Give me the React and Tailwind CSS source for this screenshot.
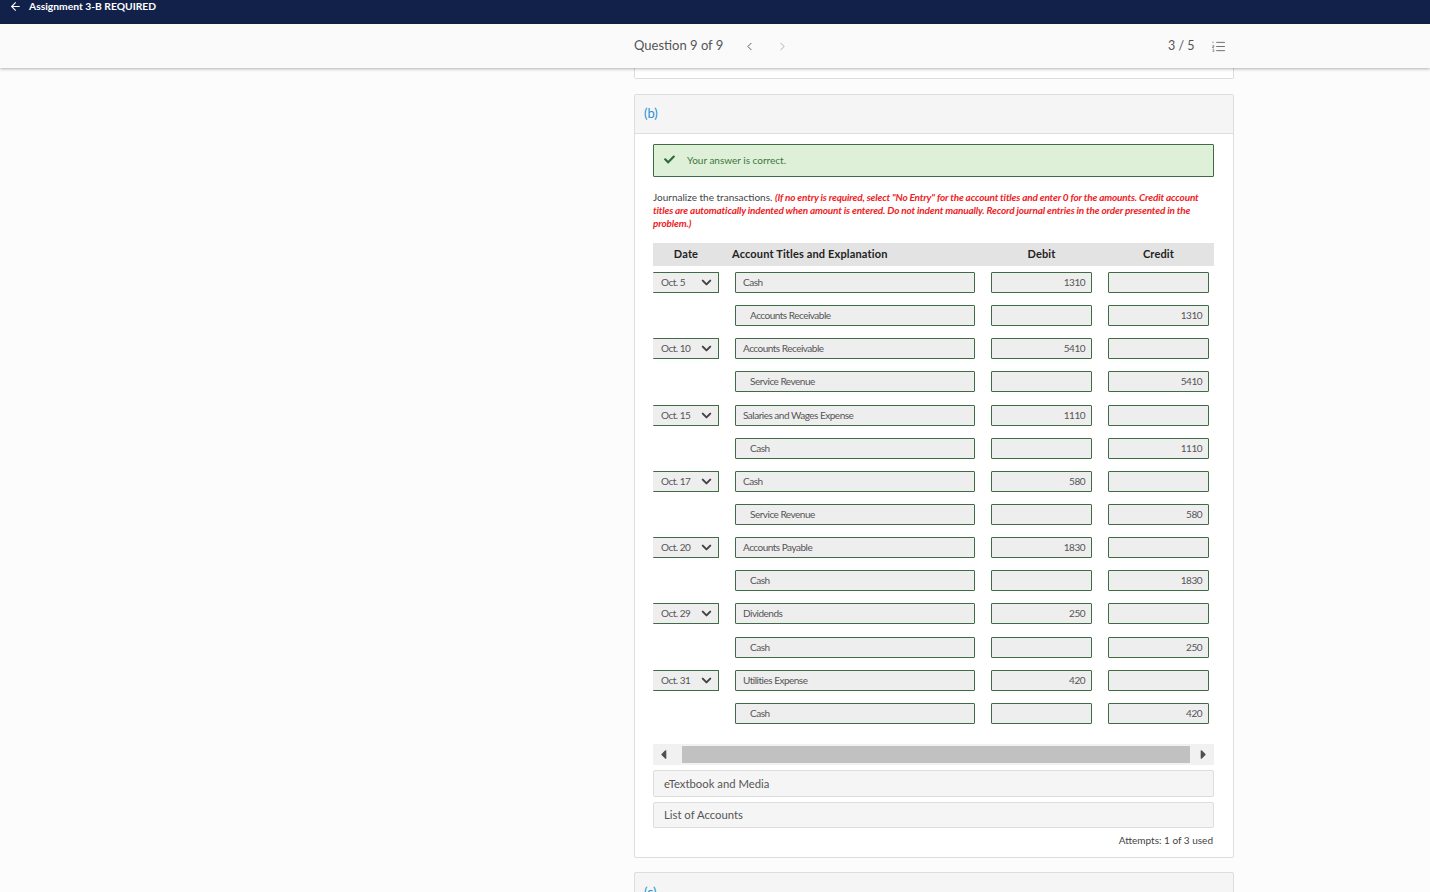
import { ArrowLeft, ChevronLeft, ChevronRight, ChevronDown } from "lucide-react";
import { FaCheck, FaCaretLeft, FaCaretRight } from "react-icons/fa";

const rows = [
  { date: "Oct. 5", account: "Cash", debit: "1310" },
  { account: "Accounts Receivable", credit: "1310" },
  { date: "Oct. 10", account: "Accounts Receivable", debit: "5410" },
  { account: "Service Revenue", credit: "5410" },
  { date: "Oct. 15", account: "Salaries and Wages Expense", debit: "1110" },
  { account: "Cash", credit: "1110" },
  { date: "Oct. 17", account: "Cash", debit: "580" },
  { account: "Service Revenue", credit: "580" },
  { date: "Oct. 20", account: "Accounts Payable", debit: "1830" },
  { account: "Cash", credit: "1830" },
  { date: "Oct. 29", account: "Dividends", debit: "250" },
  { account: "Cash", credit: "250" },
  { date: "Oct. 31", account: "Utilities Expense", debit: "420" },
  { account: "Cash", credit: "420" },
];

const inputClass =
  "h-[21px] border border-[#3f6b45] rounded-[1px] bg-[#eeeeee] text-[10px] tracking-[-0.5px] text-[#555555] flex items-center";

const QuestionListIcon = () => {
  return (
    <svg width="13" height="11" viewBox="0 0 14 12" className="text-[#666666]" fill="none" stroke="currentColor">
      <path d="M4.5 1.5H14M4.5 6H14M4.5 10.5H14" strokeWidth="1" />
      <path d="M1 .5V2.5M.5 5H2V6.5H.5V7.5H2M.5 9.5H2V11.5H.5" strokeWidth="0.7" />
    </svg>
  );
};

const JournalRow = ({ row }) => {
  return (
    <div className="flex h-[33.15px]">
      <div className="w-[66px] mr-[16px]">
        {row.date && (
          <div className={`${inputClass} border-l-0 justify-between pl-[8px] pr-[4px]`}>
            <span>{row.date}</span>
            <ChevronDown size={15} strokeWidth={3.25} className="text-[#444444]" />
          </div>
        )}
      </div>
      <div className={`${inputClass} w-[240px] mr-[16px] ${row.date ? "pl-[7px]" : "pl-[14px]"}`}>
        {row.account}
      </div>
      <div className={`${inputClass} w-[101px] mr-[16px] justify-end pr-[6px]`}>{row.debit}</div>
      <div className={`${inputClass} w-[101px] justify-end pr-[6px]`}>{row.credit}</div>
    </div>
  );
};

const App = () => {
  return (
    <div className="h-[892px] overflow-hidden bg-[#fcfcfc] font-['Lato',sans-serif] relative">
      <div className="h-[24px] bg-[#12214a] flex items-start pl-[9px] text-white">
        <ArrowLeft size={13} strokeWidth={2} />
        <span className="ml-[7px] text-[10.3px] leading-[12px] font-bold">Assignment 3-B REQUIRED</span>
      </div>

      <div className="h-[44px] bg-[#fafafa] shadow-[0_1px_3px_rgba(0,0,0,0.3)] relative z-10 flex items-center pl-[634px]">
        <span className="text-[13px] text-[#555555] w-[109px]">Question 9 of 9</span>
        <ChevronLeft size={13} strokeWidth={1.75} className="text-[#555555]" />
        <ChevronRight size={13} strokeWidth={1.75} className="ml-[20px] text-[#aaaaaa]" />
        <span className="ml-[379px] w-[44px] text-[12.5px] text-[#555555]">3 / 5</span>
        <QuestionListIcon />
      </div>

      <div className="ml-[634px] w-[600px]">
        <div className="h-[11px] bg-white border border-t-0 border-[#dddddd] rounded-b-[2px]" />

        <div className="mt-[15px] h-[764px] bg-white border border-[#dddddd] rounded-[2px]">
          <div className="h-[39px] bg-[#f5f5f5] border-b border-[#dddddd] flex items-center pl-[9px] text-[13px] text-[#1f93d0]">
            (b)
          </div>

          <div className="pl-[18px] pr-[19px] pt-[10px]">
            <div className="h-[33px] bg-[#dff0d8] border border-[#3f6b45] rounded-[1px] flex items-center pl-[10px] text-[10px] text-[#3c763d]">
              <FaCheck size={11} className="text-[#2f6b3a] mb-[3px]" />
              <span className="ml-[12px] mb-[1px]">Your answer is correct.</span>
            </div>

            <p className="mt-[14px] text-[10px] leading-[13px] text-[#444444]">
              Journalize the transactions.{" "}
              <em className="font-bold text-[#ee1c25] tracking-[-0.17px]">
                (If no entry is required, select "No Entry" for the account titles and enter 0 for the amounts. Credit
                account titles are automatically indented when amount is entered. Do not indent manually. Record
                journal entries in the order presented in the problem.)
              </em>
            </p>

            <div className="mt-[13px] h-[23px] bg-[#e3e3e3] flex items-center text-[11px] font-bold text-[#222222] tracking-[0.15px]">
              <span className="w-[66px] text-center">Date</span>
              <span className="ml-[13px] w-[259px]">Account Titles and Explanation</span>
              <span className="w-[101px] text-center">Debit</span>
              <span className="w-[101px] ml-[16px] text-center">Credit</span>
            </div>

            <div className="mt-[6px]">
              {rows.map((row, i) => (
                <JournalRow key={i} row={row} />
              ))}
            </div>

            <div className="mt-[8px] h-[21px] bg-[#f1f1f1] flex items-center">
              <div className="w-[29px] flex justify-center pr-[9px]">
                <FaCaretLeft size={15} className="text-[#505050]" />
              </div>
              <div className="w-[508px] h-[17px] bg-[#c1c1c1]" />
              <div className="flex-1 flex justify-center pl-[2px]">
                <FaCaretRight size={15} className="text-[#505050]" />
              </div>
            </div>

            <div className="mt-[5px] h-[27px] bg-[#f5f5f5] border border-[#dddddd] rounded-[2px] flex items-center pl-[10px] pt-[2px] text-[11.3px] text-[#555555]">
              eTextbook and Media
            </div>
            <div className="mt-[5px] h-[26px] bg-[#f5f5f5] border border-[#dddddd] rounded-[2px] flex items-center pl-[10px] text-[11.3px] text-[#555555]">
              List of Accounts
            </div>
            <div className="mt-[6px] pr-[1px] text-right text-[10px] leading-[13px] text-[#444444]">Attempts: 1 of 3 used</div>
          </div>
        </div>

        <div className="mt-[14px] h-[40px] bg-[#f5f5f5] border border-[#dddddd] rounded-[2px] pl-[9px] pt-[10px] text-[13px] text-[#1f93d0]">
          (c)
        </div>
      </div>
    </div>
  );
};

export default App;
